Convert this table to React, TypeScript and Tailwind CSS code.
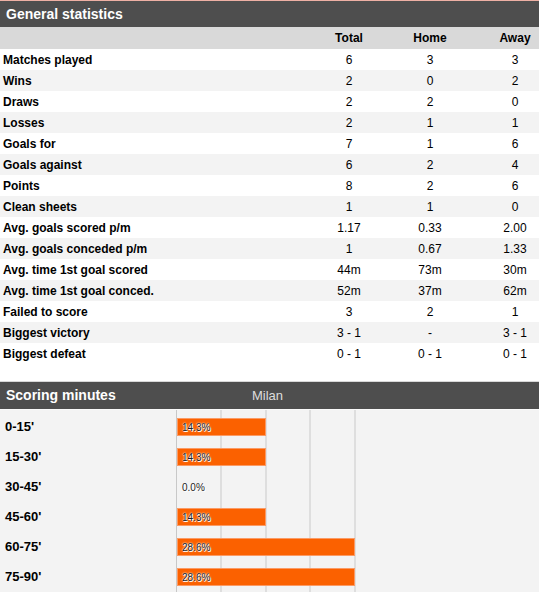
import React from "react";

const stats = [
  ["Matches played", "6", "3", "3"],
  ["Wins", "2", "0", "2"],
  ["Draws", "2", "2", "0"],
  ["Losses", "2", "1", "1"],
  ["Goals for", "7", "1", "6"],
  ["Goals against", "6", "2", "4"],
  ["Points", "8", "2", "6"],
  ["Clean sheets", "1", "1", "0"],
  ["Avg. goals scored p/m", "1.17", "0.33", "2.00"],
  ["Avg. goals conceded p/m", "1", "0.67", "1.33"],
  ["Avg. time 1st goal scored", "44m", "73m", "30m"],
  ["Avg. time 1st goal conced.", "52m", "37m", "62m"],
  ["Failed to score", "3", "2", "1"],
  ["Biggest victory", "3 - 1", "-", "3 - 1"],
  ["Biggest defeat", "0 - 1", "0 - 1", "0 - 1"],
];

const minutes = [
  { label: "0-15'", pct: 14.3 },
  { label: "15-30'", pct: 14.3 },
  { label: "30-45'", pct: 0 },
  { label: "45-60'", pct: 14.3 },
  { label: "60-75'", pct: 28.6 },
  { label: "75-90'", pct: 28.6 },
];

// 28.6% == 178px
const PX_PER_PCT = 178 / 28.6;

export default function App() {
  return (
    <div className="w-[539px] h-[592px] overflow-hidden bg-white text-[12px] text-black font-['Liberation_Sans',Arial,sans-serif]">
      {/* GENERAL STATISTICS */}
      <div className="h-px bg-[#eeb0a4]" />
      <div className="h-[26px] bg-[#4e4e4e] flex items-center px-[6px] text-white font-bold text-[14px]">
        General statistics
      </div>
      <div className="grid grid-cols-[1fr_80px_82px_68px] h-[22px] items-center bg-[#d9d9d9] font-bold">
        <div />
        <div className="text-center">Total</div>
        <div className="text-center">Home</div>
        <div className="text-center pl-[20px]">Away</div>
      </div>
      {stats.map((r, i) => (
        <div
          key={r[0]}
          className={`grid grid-cols-[1fr_80px_82px_68px] h-[21px] items-center ${
            i % 2 === 1 ? "bg-[#f3f3f3]" : "bg-white"
          }`}
        >
          <div className="pl-[3px] font-bold">{r[0]}</div>
          <div className="text-center">{r[1]}</div>
          <div className="text-center">{r[2]}</div>
          <div className="text-center pl-[20px]">{r[3]}</div>
        </div>
      ))}

      {/* SCORING MINUTES */}
      <div className="h-[17px]" />
      <div className="h-px bg-[#d8d8d8]" />
      <div className="h-[27px] bg-[#4e4e4e] flex items-center text-[14px]">
        <div className="w-[252px] pl-[6px] text-white font-bold">Scoring minutes</div>
        <div className="text-[#dddddd] text-[13px]">Milan</div>
      </div>
      <div className="relative bg-[#f3f3f3] h-[183px] pt-[2px] border-t border-[#fafafa]">
        {/* grid lines */}
        <div className="absolute top-0 bottom-0 left-[176px] w-px bg-[#c8c8c8]" />
        <div className="absolute top-0 bottom-0 left-[220px] w-[2px] bg-[#dedede]" />
        <div className="absolute top-0 bottom-0 left-[265px] w-[2px] bg-[#dedede]" />
        <div className="absolute top-0 bottom-0 left-[309px] w-[2px] bg-[#dedede]" />
        <div className="absolute top-0 bottom-0 left-[354px] w-[2px] bg-[#dedede]" />
        {minutes.map((m) => (
          <div key={m.label} className="relative flex items-center h-[30px]">
            <div className="w-[177px] pl-[5px] font-bold text-[13px]">{m.label}</div>
            <div className="relative h-[18px] flex items-center">
              {m.pct > 0 && (
                <div
                  className="absolute left-0 top-0 h-[18px] bg-[#fb6100] border border-[#fb9a64]"
                  style={{ width: Math.round(m.pct * PX_PER_PCT) }}
                />
              )}
              <span className="relative pl-[5px] text-[10px] text-[#222] [text-shadow:0_0_2px_#fff,0_0_1px_#fff,1px_1px_0_#fff]">
                {m.pct.toFixed(1)}%
              </span>
            </div>
          </div>
        ))}
      </div>
    </div>
  );
}
